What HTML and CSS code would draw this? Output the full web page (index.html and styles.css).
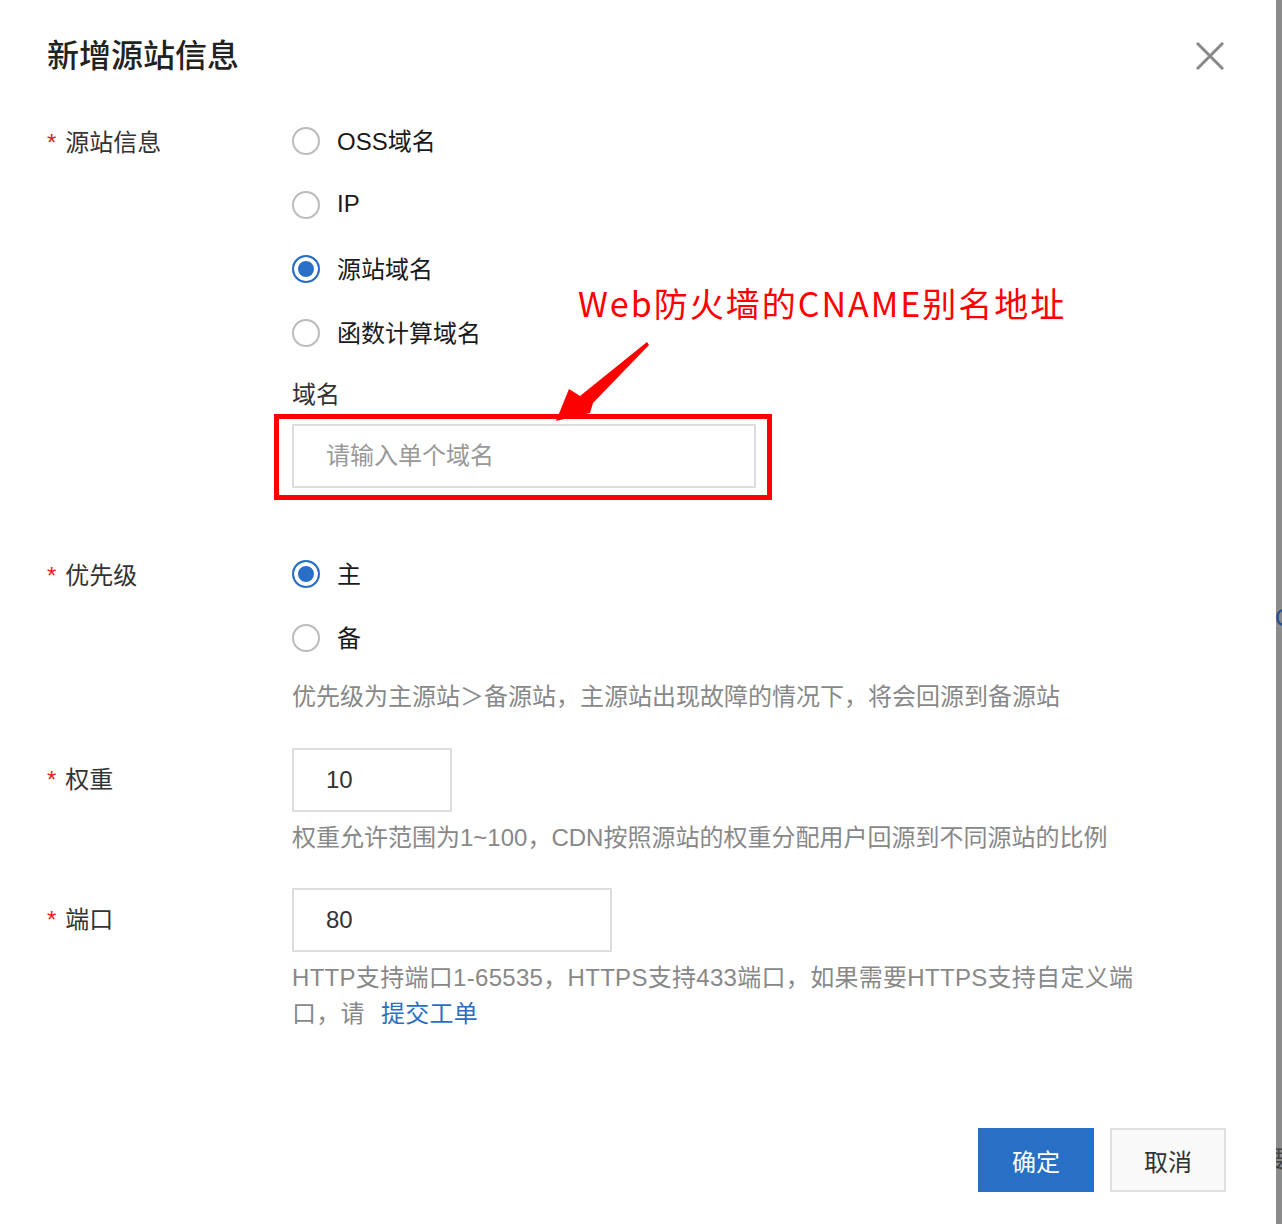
FILE: index.html
```html
<!DOCTYPE html>
<html lang="zh-CN">
<head>
    <meta charset="UTF-8">
    <meta name="viewport" content="width=device-width, initial-scale=1.0">
    <title>新增源站信息</title>
    <link rel="stylesheet" href="styles.css">
</head>
<body>
    <div class="page">
        <div class="dialog">
            <header class="dialog-header">
                <h2 class="dialog-title">新增源站信息</h2>
                <button class="close" type="button" aria-label="关闭">
                    <svg width="28" height="28" viewBox="0 0 28 28">
                        <path d="M1 1 L27 27 M27 1 L1 27" stroke="#888" stroke-width="3" fill="none"/>
                    </svg>
                </button>
            </header>

            <form class="form">
                <div class="row">
                    <label class="row-label required">源站信息</label>
                    <div class="row-control">
                        <label class="radio"><input type="radio" name="origin"><span>OSS域名</span></label>
                        <label class="radio"><input type="radio" name="origin"><span>IP</span></label>
                        <label class="radio"><input type="radio" name="origin" checked><span>源站域名</span></label>
                        <label class="radio"><input type="radio" name="origin"><span>函数计算域名</span></label>

                        <div class="sub-label">域名</div>
                        <div class="field">
                            <input class="input input-wide" type="text" placeholder="请输入单个域名">
                            <!-- annotation drawn over the screenshot -->
                            <div class="annot-box"></div>
                            <div class="annot-text">Web防火墙的CNAME别名地址</div>
                            <svg class="annot-arrow" width="100" height="84" viewBox="0 0 100 84">
                                <polygon points="97,2 99,5 43,63 40,73 6,81 19,49 30,56" fill="#ff0000"/>
                            </svg>
                        </div>
                    </div>
                </div>

                <div class="row row-priority">
                    <label class="row-label required">优先级</label>
                    <div class="row-control">
                        <label class="radio"><input type="radio" name="priority" checked><span>主</span></label>
                        <label class="radio"><input type="radio" name="priority"><span>备</span></label>
                        <p class="help">优先级为主源站＞备源站，主源站出现故障的情况下，将会回源到备源站</p>
                    </div>
                </div>

                <div class="row row-weight">
                    <label class="row-label required">权重</label>
                    <div class="row-control">
                        <input class="input input-small" type="text" value="10">
                        <p class="help">权重允许范围为1~100，CDN按照源站的权重分配用户回源到不同源站的比例</p>
                    </div>
                </div>

                <div class="row row-port">
                    <label class="row-label required">端口</label>
                    <div class="row-control">
                        <input class="input input-medium" type="text" value="80">
                        <p class="help help-wrap">HTTP支持端口1-65535，HTTPS支持433端口，如果需要HTTPS支持自定义端口，请<a class="link" href="#">提交工单</a></p>
                    </div>
                </div>
            </form>

            <footer class="dialog-footer">
                <button class="btn btn-primary" type="button">确定</button>
                <button class="btn btn-default" type="button">取消</button>
            </footer>
        </div>
        <div class="backdrop-edge">
            <span class="edge-glyph edge-c">C</span>
            <span class="edge-glyph edge-yao">要</span>
        </div>
    </div>
</body>
</html>
```

FILE: styles.css
```css
body {
    margin: 0;
    font-family: "Liberation Sans", "Noto Sans CJK SC", sans-serif;
    background: #fff;
    color: #333;
}
.page {
    display: flex;
    width: 1282px;
    height: 1224px;
    overflow: hidden;
}
.dialog {
    width: 1276px;
    height: 1224px;
    box-sizing: border-box;
    padding: 0 50px 0 47px;
    background: #fff;
}
.backdrop-edge {
    position: relative;
    width: 6px;
    height: 1224px;
    background: #8b8b8b;
    overflow: hidden;
}
.edge-glyph {
    position: absolute;
    font-size: 24px;
    line-height: 1;
}
.edge-c {
    top: 606px;
    left: -1px;
    color: #1f4f8f;
}
.edge-yao {
    top: 1148px;
    left: -12px;
    color: #444;
}

/* header */
.dialog-header {
    display: flex;
    justify-content: space-between;
    align-items: flex-start;
    height: 109px;
    box-sizing: border-box;
    padding-top: 34px;
}
.dialog-title {
    margin: 0;
    font-size: 32px;
    line-height: 44px;
    font-weight: 500;
    color: #222;
}
.close {
    width: 32px;
    height: 44px;
    padding: 0;
    border: none;
    background: none;
    display: flex;
    align-items: center;
    justify-content: center;
    cursor: pointer;
}

/* form */
.form {
    margin: 0;
}
.row {
    display: flex;
}
.row-priority {
    margin-top: 54px;
}
.row-weight {
    margin-top: 33px;
}
.row-port {
    margin-top: 32px;
}
.row-label {
    width: 245px;
    flex-shrink: 0;
    box-sizing: border-box;
    padding-top: 2px;
    font-size: 24px;
    line-height: 64px;
    color: #333;
}
.row-weight .row-label,
.row-port .row-label {
    padding-top: 0;
}
.row-label.required::before {
    content: "*";
    color: #e2231a;
    margin-right: 9px;
}
.row-control {
    flex: 1;
}
.radio {
    display: flex;
    align-items: center;
    height: 64px;
    font-size: 24px;
    color: #1a1a1a;
    cursor: pointer;
}
.radio span {
    padding-bottom: 3px;
}
.radio input {
    appearance: none;
    -webkit-appearance: none;
    width: 28px;
    height: 28px;
    margin: 0 17px 0 0;
    border: 2px solid #bbb;
    border-radius: 50%;
    background: #fff;
    box-sizing: border-box;
}
.radio input:checked {
    border-color: #2a6fc7;
    background: #2a6fc7;
    box-shadow: inset 0 0 0 4px #fff;
}
.sub-label {
    margin-top: 12px;
    font-size: 24px;
    line-height: 36px;
    color: #333;
}
.field {
    position: relative;
    margin-top: 11px;
    width: 464px;
}
.input {
    display: block;
    height: 64px;
    box-sizing: border-box;
    border: 2px solid #ddd;
    padding: 0 32px;
    font-family: inherit;
    font-size: 24px;
    color: #333;
    background: #fff;
    outline: none;
}
.input::placeholder {
    color: #999;
}
.input-wide {
    width: 464px;
}
.input-small {
    width: 160px;
}
.input-medium {
    width: 320px;
}
.help {
    margin: 8px 0 0;
    font-size: 24px;
    line-height: 36px;
    color: #888;
}
.row-priority .help {
    margin-top: 9px;
}
.help-wrap {
    max-width: 850px;
    letter-spacing: 0.3px;
}
.link {
    margin-left: 16px;
    color: #2a6fc7;
    text-decoration: none;
}

/* annotation */
.annot-box {
    position: absolute;
    top: -10px;
    left: -18px;
    right: -16px;
    bottom: -12px;
    border: 5px solid #ff0000;
}
.annot-text {
    position: absolute;
    top: -141px;
    left: 286px;
    white-space: nowrap;
    font-family: "Noto Sans CJK SC", sans-serif;
    font-size: 34px;
    line-height: 40px;
    letter-spacing: 2px;
    color: #ff0000;
}
.annot-arrow {
    position: absolute;
    top: -84px;
    left: 258px;
}

/* footer */
.dialog-footer {
    display: flex;
    justify-content: flex-end;
    gap: 16px;
    margin-top: 96px;
}
.btn {
    width: 116px;
    height: 64px;
    font-family: inherit;
    font-size: 24px;
    cursor: pointer;
}
.btn-primary {
    background: #2870c6;
    color: #fff;
    border: none;
}
.btn-default {
    background: #f9f9f9;
    color: #333;
    border: 2px solid #e0e0e0;
}
```
